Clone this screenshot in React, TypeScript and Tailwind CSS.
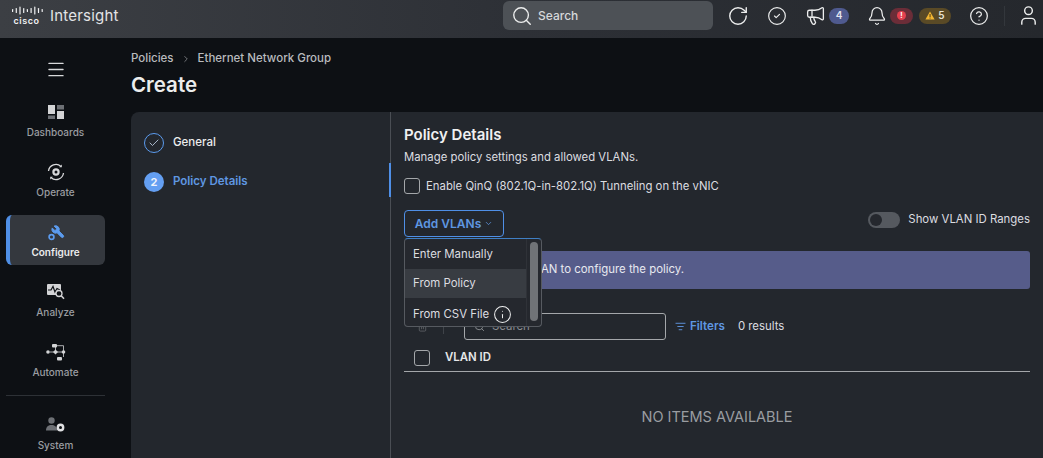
import React from "react";
import { Search, RotateCw, CircleCheck, Megaphone, Bell, CircleHelp, User, Menu, Check, ChevronDown, ChevronRight, Info, ListFilter, Trash2 } from "lucide-react";

const font = "font-['Inter','Noto_Sans',sans-serif]";

function CiscoLogo() {
  const bars = [3, 5, 8, 5, 3, 5, 8, 5, 3];
  return (
    <div className="flex w-[33px] flex-col items-center">
      <svg width="32" height="9" viewBox="0 0 32 9">
        {bars.map((h, i) => (
          <rect key={i} x={i * 3.7 + 1} y={(9 - h) / 2} width="1.2" height={h} rx="0.6" fill="#f1f2f3" />
        ))}
      </svg>
      <span className="mt-[1px] text-[9px] leading-[9px] font-semibold tracking-[0.5px] text-[#f1f2f3]">cisco</span>
    </div>
  );
}

function TopBar() {
  return (
    <header className="flex h-[38px] items-center bg-gradient-to-r from-[#3c3f44] via-[#2d3036] to-[#25282d] pb-[7px]">
      <div className="ml-[10px] flex w-[115px] items-center gap-[7px]">
        <CiscoLogo />
        <span className="text-[15px] leading-none tracking-[0.2px] text-[#e3e4e6]">Intersight</span>
      </div>
      <div className="ml-[378px] flex h-[29px] w-[210px] items-center gap-[5px] rounded-[6px] bg-[#4d5156] pl-[8px] text-[12px] font-medium text-[#d6d8da]">
        <Search size={22} strokeWidth={1.5} className="text-[#eceded]" />
        Search
      </div>
      <div className="flex items-center text-[#eceded]">
        <RotateCw size={22} strokeWidth={1.5} className="ml-[14px]" />
        <CircleCheck size={20} strokeWidth={1.4} className="ml-[18px]" />
        <Megaphone size={21} strokeWidth={1.5} className="ml-[18px]" />
        <span className="ml-[3px] flex h-[16px] w-[20px] items-center justify-center rounded-full bg-[#4f5a8f] text-[10px] font-semibold text-[#e4e6f0]">4</span>
        <Bell size={20} strokeWidth={1.5} className="ml-[18px]" />
        <span className="ml-[3px] flex h-[16px] w-[23px] items-center justify-center rounded-full bg-[#6b2d38]">
          <span className="flex h-[9px] w-[9px] items-center justify-center rounded-full bg-[#e5404f] text-[7px] leading-none font-bold text-white">!</span>
        </span>
        <span className="ml-[6px] flex h-[16px] w-[32px] items-center justify-center gap-[3px] rounded-full bg-[#5a4a26] text-[10px] font-semibold text-[#e8e4d6]">
          <svg width="10" height="9" viewBox="0 0 10 9">
            <path d="M5 0.5 9.6 8.5H0.4Z" fill="#f2b632" />
            <rect x="4.6" y="3" width="0.9" height="3" fill="#3a2f12" />
            <rect x="4.6" y="6.6" width="0.9" height="0.9" fill="#3a2f12" />
          </svg>
          5
        </span>
        <CircleHelp size={20} strokeWidth={1.5} className="ml-[18px]" />
        <span className="ml-[15px] h-[20px] w-[1px] bg-[#33373c]" />
        <User size={23} strokeWidth={1.5} className="ml-[12px]" />
      </div>
    </header>
  );
}

function DashIcon() {
  return (
    <svg width="16" height="14" viewBox="0 0 16 14">
      <rect x="0" y="0" width="7" height="9" fill="#d3d4d6" />
      <rect x="0" y="10.5" width="7" height="3.5" fill="#6d7075" />
      <rect x="9" y="0" width="7" height="4.5" fill="#6d7075" />
      <rect x="9" y="6" width="7" height="8" fill="#d3d4d6" />
    </svg>
  );
}

function OperateIcon() {
  return (
    <svg width="18" height="18" viewBox="0 0 18 18" fill="none" stroke="#d8d9db">
      <path d="M1.5 8A7.5 7.5 0 0 1 14 3.4" strokeWidth="1.3" />
      <path d="M16.5 10A7.5 7.5 0 0 1 4 14.6" strokeWidth="1.3" />
      <path d="M14.8 1.6V4.2H12.2Z" fill="#d8d9db" stroke="none" />
      <path d="M3.2 16.4V13.8H5.8Z" fill="#d8d9db" stroke="none" />
      <circle cx="9" cy="9" r="2.6" strokeWidth="2.2" />
    </svg>
  );
}

function WrenchIcon() {
  return (
    <svg width="18" height="18" viewBox="0 0 18 18" fill="none" stroke="#5b9bee">
      <g transform="translate(18.5 1.5) scale(-0.62 0.62)">
        <path
          d="M14.7 6.3a1 1 0 0 0 0 1.4l1.6 1.6a1 1 0 0 0 1.4 0l3.77-3.77a6 6 0 0 1-7.94 7.94l-6.91 6.91a2.12 2.12 0 0 1-3-3l6.91-6.91a6 6 0 0 1 7.94-7.94l-3.76 3.76z"
          fill="#5b9bee"
          strokeWidth="1.5"
        />
      </g>
      <circle cx="4.5" cy="14" r="2.4" strokeWidth="1.7" />
    </svg>
  );
}

function AnalyzeIcon() {
  return (
    <svg width="18" height="17" viewBox="0 0 18 17">
      <rect x="0" y="1" width="14" height="11" rx="1" fill="#d3d4d6" />
      <path d="M1 7H4L6 3.5 8 9 10 5.5 13 7" fill="none" stroke="#0d1014" strokeWidth="1.2" />
      <circle cx="12" cy="10.5" r="3" fill="#0d1014" stroke="#d3d4d6" strokeWidth="1.3" />
      <path d="M14.2 12.8 17 15.8" stroke="#d3d4d6" strokeWidth="1.6" />
    </svg>
  );
}

function AutomateIcon() {
  return (
    <svg width="20" height="18" viewBox="0 0 20 18" fill="#d3d4d6">
      <circle cx="2" cy="9" r="1.8" />
      <rect x="6" y="1" width="5" height="3.4" rx="1" />
      <path d="M9.5 6.5 12 9 9.5 11.5 7 9Z" />
      <circle cx="17.5" cy="9" r="1.8" />
      <rect x="11" y="14" width="5" height="3.4" rx="1" />
      <path d="M4 9H16M9.5 4V7M11 2.7H17.5V14" fill="none" stroke="#d3d4d6" strokeWidth="0.8" />
    </svg>
  );
}

function SystemIcon() {
  return (
    <svg width="19" height="16" viewBox="0 0 19 16">
      <circle cx="5.5" cy="3.5" r="3.2" fill="#6d7075" />
      <path d="M0 13.5C0 9.5 2.5 8 5.5 8S11 9.5 11 13.5Z" fill="#6d7075" />
      <circle cx="14.5" cy="10.5" r="2.7" fill="none" stroke="#e0e1e3" strokeWidth="2.4" />
    </svg>
  );
}

function NavItem({ icon, label, active }: { icon: React.ReactNode; label: string; active?: boolean }) {
  return (
    <div
      className={`ml-[6px] flex h-[50px] w-[99px] flex-col items-center justify-center rounded-[6px] ${
        active ? "border-l-[4px] border-[#4f8fe6] bg-[#34383e] pr-[4px] text-[#eceded]" : "text-[#9a9da1]"
      }`}
    >
      <div className="flex h-[20px] items-center justify-center">{icon}</div>
      <span className={`mt-[4px] text-[10px] leading-[13px] ${active ? "font-semibold" : "font-medium"}`}>{label}</span>
    </div>
  );
}

function Sidebar() {
  return (
    <nav className="flex w-[131px] shrink-0 flex-col">
      <Menu size={22} strokeWidth={1.6} className="mt-[21px] ml-[45px] text-[#d8d9db]" />
      <div className="mt-[15px] flex flex-col gap-[10px]">
        <NavItem icon={<DashIcon />} label="Dashboards" />
        <NavItem icon={<OperateIcon />} label="Operate" />
        <NavItem icon={<WrenchIcon />} label="Configure" active />
        <NavItem icon={<AnalyzeIcon />} label="Analyze" />
        <NavItem icon={<AutomateIcon />} label="Automate" />
      </div>
      <div className="mt-[10px] ml-[6px] h-[1px] w-[99px] bg-[#2d3136]" />
      <div className="mt-[12px]">
        <NavItem icon={<SystemIcon />} label="System" />
      </div>
    </nav>
  );
}

function Steps() {
  return (
    <aside className="relative w-[260px] shrink-0 border-r border-[#4a4e54] pt-[21px] pl-[13px]">
      <div className="flex items-center gap-[9px]">
        <span className="flex h-[20px] w-[20px] items-center justify-center rounded-full border-[1.5px] border-[#5b9bee] text-[#c8d8ee]">
          <Check size={12} strokeWidth={1.6} />
        </span>
        <span className="text-[11.5px] font-medium text-[#eceded]">General</span>
      </div>
      <div className="mt-[19px] flex items-center gap-[9px]">
        <span className="flex h-[20px] w-[20px] items-center justify-center rounded-full bg-[#649ff2] text-[11px] font-bold text-[#eef3fb]">2</span>
        <span className="text-[11.5px] font-semibold text-[#5f97e2]">Policy Details</span>
      </div>
      <span className="absolute top-[51px] right-[-1px] h-[34px] w-[2px] bg-[#4f8fe6]" />
    </aside>
  );
}

function AddVlansMenu() {
  return (
    <div className="absolute top-[126px] left-[13px] z-10 flex h-[89px] w-[138px] overflow-hidden rounded-[4px] border border-[#565a60] border-t-[#3f7fc4] bg-[#25282e] text-[11.4px] text-[#dcdde0]">
      <div className="flex w-[121px] flex-col">
        <div className="flex h-[30px] shrink-0 items-center pt-[1px] pl-[8px]">Enter Manually</div>
        <div className="flex h-[29px] shrink-0 items-center bg-[#383c42] pl-[8px]">From Policy</div>
        <div className="flex h-[30px] shrink-0 items-center gap-[4px] pt-[3px] pl-[8px]">
          From CSV File
          <Info size={19} strokeWidth={1.3} className="text-[#eceded]" />
        </div>
      </div>
      <div className="flex flex-1 justify-center border-l border-[#2f3238] pt-[3px]">
        <div className="h-[79px] w-[8px] rounded-full bg-[#707377]" />
      </div>
    </div>
  );
}

function Details() {
  return (
    <section className="relative min-w-0 flex-1 pt-[14px] pl-[13px] text-[#dcdde0]">
      <h2 className="text-[15px] leading-[18px] font-semibold text-[#f0f0f1]">Policy Details</h2>
      <p className="mt-[5px] text-[11.35px] leading-[16px]">Manage policy settings and allowed VLANs.</p>
      <label className="mt-[13px] flex items-center gap-[6px] text-[11.35px] leading-[16px]">
        <span className="h-[16px] w-[16px] rounded-[3px] border border-[#a4a7aa]" />
        Enable QinQ (802.1Q-in-802.1Q) Tunneling on the vNIC
      </label>

      <div className="mt-[16px] flex items-start justify-between pr-[13px]">
        <button className="flex h-[27px] w-[100px] items-center justify-center gap-[3px] rounded-[4px] border-[1.5px] border-[#4f8fe6] text-[12px] font-semibold text-[#5f97e2]">
          Add VLANs
          <ChevronDown size={9} strokeWidth={2} />
        </button>
        <div className="mt-[1px] flex items-center gap-[8px] text-[11.4px]">
          <span className="flex h-[16px] w-[32px] items-center rounded-full bg-[#55595f] pl-[2px]">
            <span className="h-[12px] w-[12px] rounded-full bg-[#25282e]" />
          </span>
          Show VLAN ID Ranges
        </div>
      </div>

      <div className="mt-[14px] mr-[13px] flex h-[38px] items-center justify-end rounded-[3px] bg-[#565c8a] pr-[346px] text-[11.4px] text-[#e8e9f0]">
        AN to configure the policy.
      </div>

      <div className="mt-[24px] flex h-[27px] items-center text-[11.4px]">
        <Trash2 size={11} strokeWidth={1.5} className="ml-[13px] text-[#6d7075]" />
        <span className="ml-[15px] h-[14px] w-[1px] bg-[#3f4349]" />
        <div className="ml-[20px] flex h-[27px] w-[202px] items-center gap-[7px] rounded-[3px] border border-[#a4a7aa] pl-[9px] text-[#8b8e92]">
          <Search size={11} />
          Search
        </div>
        <ListFilter size={11} strokeWidth={2} className="ml-[9px] text-[#5f97e2]" />
        <span className="ml-[4px] text-[11.6px] font-semibold text-[#5f97e2]">Filters</span>
        <span className="ml-[13px]">0 results</span>
      </div>

      <div className="mt-[2px] mr-[13px] flex h-[30px] items-center border-b-[1.5px] border-[#a4a7aa] pt-[2px] pl-[10px]">
        <span className="h-[16px] w-[16px] rounded-[3px] border border-[#a4a7aa]" />
        <span className="ml-[15px] text-[11.4px] font-semibold text-[#e6e7e8]">VLAN ID</span>
      </div>

      <div className="mt-[36px] pr-[13px] text-center text-[14.5px] leading-[18px] text-[#9a9da1]">NO ITEMS AVAILABLE</div>

      <AddVlansMenu />
    </section>
  );
}

export default function App() {
  return (
    <div className={`flex h-[458px] w-[1043px] flex-col overflow-hidden bg-[#0d1014] ${font}`}>
      <TopBar />
      <div className="flex min-h-0 flex-1">
        <Sidebar />
        <main className="flex min-w-0 flex-1 flex-col">
          <div className="mt-[13px] flex items-center gap-[7px] text-[11.5px] leading-[15px] font-medium text-[#b9bbbe]">
            Policies
            <ChevronRight size={10} className="text-[#85888c]" />
            Ethernet Network Group
          </div>
          <h1 className="mt-[6px] text-[20.5px] leading-[26px] font-semibold text-[#eceded]">Create</h1>
          <div className="mt-[14px] flex min-h-0 flex-1 overflow-hidden rounded-tl-[8px] bg-[#23272d]">
            <Steps />
            <Details />
          </div>
        </main>
      </div>
    </div>
  );
}
